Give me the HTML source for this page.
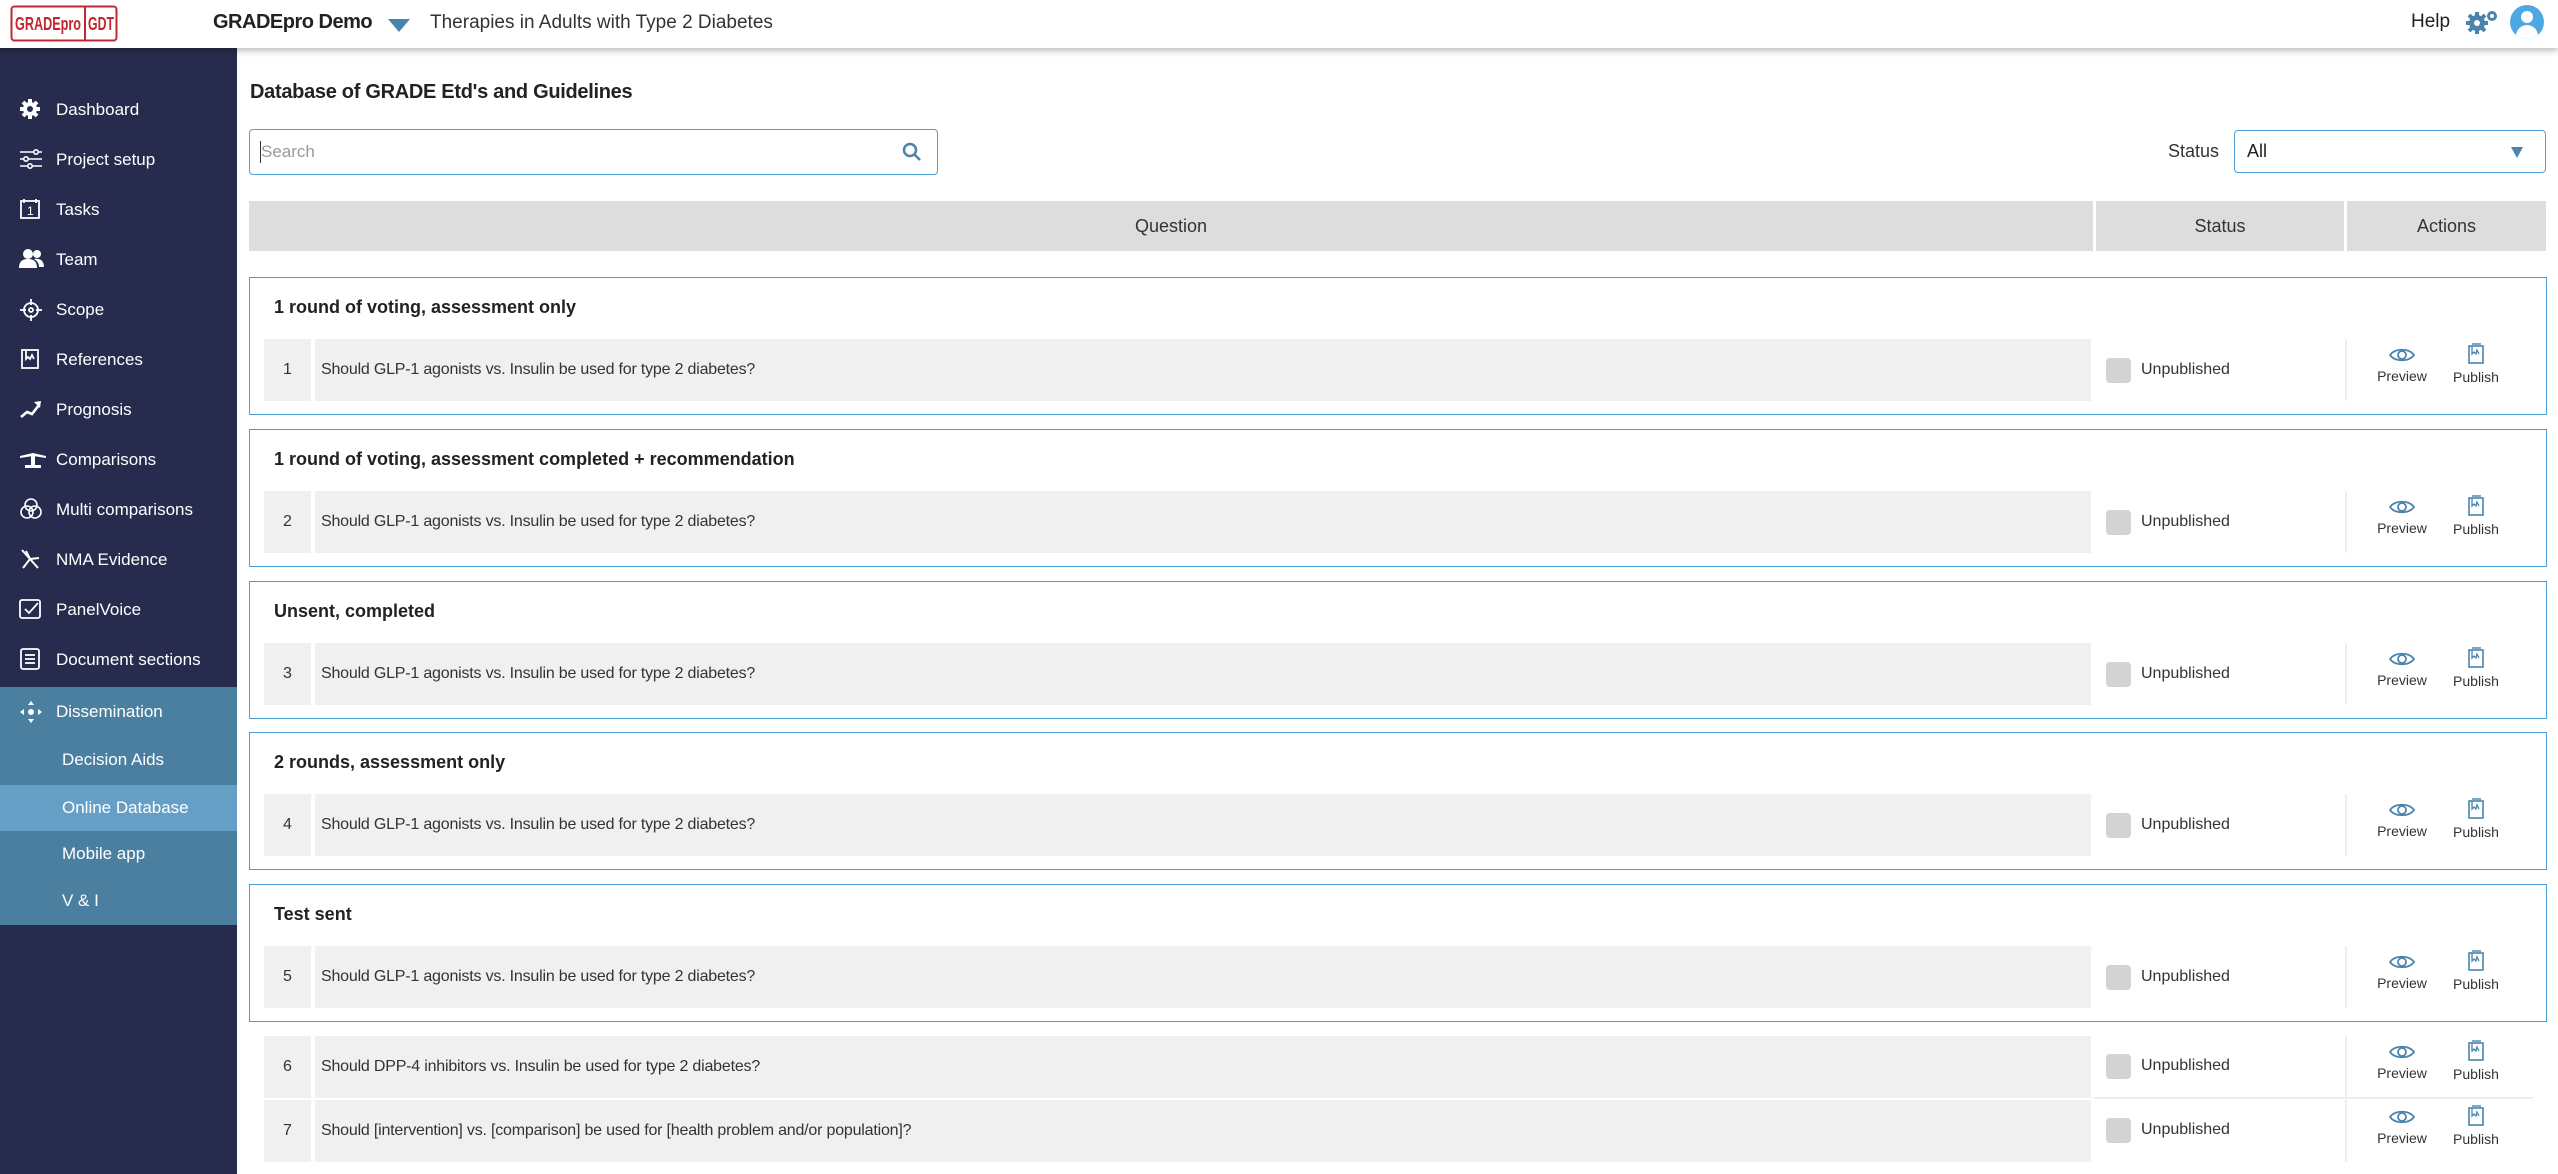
<!DOCTYPE html>
<html><head><meta charset="utf-8">
<style>
*{box-sizing:border-box;margin:0;padding:0}
body{width:2558px;height:1174px;overflow:hidden;background:#fff;font-family:"Liberation Sans",sans-serif;color:#333;position:relative}
.abs{position:absolute}
#hdr{left:0;top:0;width:2558px;height:48px;background:#fff;box-shadow:0 3px 6px rgba(0,0,0,.25);z-index:5}
#side{left:0;top:48px;width:237px;height:1126px;background:#272c4e}
.si{position:absolute;left:0;width:237px;height:50px;color:#fff;font-size:17px;line-height:50px;padding-left:56px}
.si svg{position:absolute;left:19px;top:13px}
.sub{position:absolute;left:0;width:237px;height:46px;line-height:46px;color:#fff;font-size:17px;padding-left:62px}
.gt{font-weight:bold;font-size:18px;color:#222}
.box{position:absolute;left:249px;width:2298px;height:138px;border:1.5px solid #4a9fd5}
.num{position:absolute;left:264px;width:47px;height:62px;background:#f0f0f0;text-align:center;line-height:62px;font-size:16px}
.q{position:absolute;left:315px;width:1776px;height:62px;background:#f0f0f0;line-height:62px;font-size:16px;padding-left:6px;letter-spacing:-0.2px}
.cb{position:absolute;left:2106px;width:25px;height:25px;background:#d3d3d3;border-radius:4px}
.ut{position:absolute;left:2141px;font-size:16px;line-height:20px}
.dv{position:absolute;left:2345px;width:2px;height:62px;background:#eee}
.act{position:absolute;font-size:14px;color:#333;text-align:center;width:70px}
.act svg{display:block;margin:0 auto 4px}
</style></head><body>
<div id="hdr" class="abs">
  <svg class="abs" style="left:10px;top:5px" width="108" height="37" viewBox="0 0 108 37">
    <rect x="1.5" y="1.5" width="105" height="34" rx="3" fill="none" stroke="#c0282d" stroke-width="2"/>
    <line x1="75" y1="1.5" x2="75" y2="35.5" stroke="#c0282d" stroke-width="2"/>
    <text x="5" y="25" font-family="Liberation Sans" font-weight="bold" font-size="18" fill="#c0282d" textLength="66" lengthAdjust="spacingAndGlyphs">GRADEpro</text>
    <text x="78" y="25" font-family="Liberation Sans" font-weight="bold" font-size="18" fill="#c0282d" textLength="26" lengthAdjust="spacingAndGlyphs">GDT</text>
  </svg>
  <div class="abs" style="left:213px;top:11px;font-weight:bold;font-size:20px;color:#222;letter-spacing:-0.5px">GRADEpro Demo</div>
  <div class="abs" style="left:388px;top:19px;width:0;height:0;border-left:11px solid transparent;border-right:11px solid transparent;border-top:13px solid #4a84ac"></div>
  <div class="abs" style="left:430px;top:12px;font-size:19px;color:#333">Therapies in Adults with Type 2 Diabetes</div>
  <div class="abs" style="left:2411px;top:11px;font-size:19px;color:#222">Help</div>
  <svg class="abs" style="left:2465px;top:9px" width="34" height="26" viewBox="0 0 34 26"><g fill="#4a84ac"><circle cx="12" cy="14" r="8"/><g stroke="#4a84ac" stroke-width="4"><line x1="12" y1="3" x2="12" y2="25"/><line x1="1" y1="14" x2="23" y2="14"/><line x1="4" y1="6" x2="20" y2="22"/><line x1="4" y1="22" x2="20" y2="6"/></g><circle cx="12" cy="14" r="3" fill="#fff"/><circle cx="27" cy="7" r="5"/><circle cx="27" cy="7" r="2" fill="#fff"/></g></svg>
  <div class="abs" style="left:2510px;top:5px;width:34px;height:34px;border-radius:50%;background:#4ea6e3;overflow:hidden">
    <div class="abs" style="left:11px;top:6px;width:12px;height:12px;border-radius:50%;background:#fff"></div>
    <div class="abs" style="left:6px;top:20px;width:22px;height:14px;border-radius:11px 11px 0 0;background:#fff"></div>
  </div>
</div>

<div id="side" class="abs">
  <div class="si" style="top:37px"><svg width="22" height="22" viewBox="0 0 22 22"><g fill="#fff"><circle cx="11" cy="11" r="7"/><g stroke="#fff" stroke-width="4"><line x1="11" y1="1" x2="11" y2="21"/><line x1="1" y1="11" x2="21" y2="11"/><line x1="4" y1="4" x2="18" y2="18"/><line x1="4" y1="18" x2="18" y2="4"/></g><circle cx="11" cy="11" r="3" fill="#272c4e"/></g></svg>Dashboard</div>
  <div class="si" style="top:87px"><svg width="24" height="22" viewBox="0 0 24 22" fill="none" stroke="#fff" stroke-width="1.6"><line x1="1" y1="4" x2="23" y2="4"/><line x1="1" y1="11" x2="23" y2="11"/><line x1="1" y1="18" x2="23" y2="18"/><circle cx="17" cy="4" r="2.2" fill="#272c4e"/><circle cx="7" cy="11" r="2.2" fill="#272c4e"/><circle cx="11" cy="18" r="2.2" fill="#272c4e"/></svg>Project setup</div>
  <div class="si" style="top:137px"><svg width="22" height="22" viewBox="0 0 22 22" fill="none" stroke="#fff" stroke-width="1.8"><rect x="2" y="3" width="18" height="17"/><line x1="5" y1="1" x2="5" y2="5"/><line x1="17" y1="1" x2="17" y2="5"/><text x="8" y="17" fill="#fff" stroke="none" font-size="12" font-family="Liberation Sans">1</text></svg>Tasks</div>
  <div class="si" style="top:187px"><svg width="26" height="22" viewBox="0 0 26 22" fill="#fff"><circle cx="9" cy="6" r="5"/><path d="M0 20c0-7 4-9 9-9s9 2 9 9z"/><circle cx="18" cy="6" r="4"/><path d="M15 11c5-1 10 1 10 8h-5c0-4-2-6-5-8z"/></svg>Team</div>
  <div class="si" style="top:237px"><svg width="24" height="24" viewBox="0 0 24 24" fill="none" stroke="#fff" stroke-width="1.8"><circle cx="12" cy="12" r="7"/><circle cx="12" cy="12" r="2"/><line x1="12" y1="1" x2="12" y2="7"/><line x1="12" y1="17" x2="12" y2="23"/><line x1="1" y1="12" x2="7" y2="12"/><line x1="17" y1="12" x2="23" y2="12"/></svg>Scope</div>
  <div class="si" style="top:287px"><svg width="22" height="22" viewBox="0 0 22 22" fill="none" stroke="#fff" stroke-width="1.8"><rect x="3" y="2" width="16" height="18"/><path d="M7 2v9l2-2 2 2 2-4 2 4"/></svg>References</div>
  <div class="si" style="top:337px"><svg width="24" height="22" viewBox="0 0 24 22" fill="none" stroke="#fff" stroke-width="2.6"><path d="M2 19l6-5 5 2 7-9"/><path d="M15 4l7-1-1 7z" fill="#fff" stroke="none"/></svg>Prognosis</div>
  <div class="si" style="top:387px"><svg width="28" height="22" viewBox="0 0 28 22" fill="#fff"><path d="M1 8l13-3 13 3v2l-13-2-13 2z"/><rect x="12" y="6" width="4" height="12"/><rect x="6" y="17" width="16" height="3"/></svg>Comparisons</div>
  <div class="si" style="top:437px"><svg width="24" height="22" viewBox="0 0 24 22" fill="none" stroke="#fff" stroke-width="1.6"><circle cx="12" cy="7" r="6"/><circle cx="8" cy="14" r="6"/><circle cx="16" cy="14" r="6"/></svg>Multi comparisons</div>
  <div class="si" style="top:487px"><svg width="22" height="22" viewBox="0 0 22 22" fill="none" stroke="#fff" stroke-width="2"><line x1="3" y1="2" x2="19" y2="20"/><line x1="11" y1="11" x2="4" y2="20"/><line x1="11" y1="11" x2="20" y2="10"/><line x1="11" y1="11" x2="7" y2="3"/></svg>NMA Evidence</div>
  <div class="si" style="top:537px"><svg width="22" height="22" viewBox="0 0 22 22" fill="none" stroke="#fff" stroke-width="1.8"><rect x="1" y="2" width="20" height="18" rx="2"/><path d="M6 11l4 4 9-10"/></svg>PanelVoice</div>
  <div class="si" style="top:587px"><svg width="22" height="22" viewBox="0 0 22 22" fill="none" stroke="#fff" stroke-width="1.8"><rect x="2" y="1" width="18" height="20" rx="2"/><line x1="6" y1="7" x2="16" y2="7"/><line x1="6" y1="11" x2="16" y2="11"/><line x1="6" y1="15" x2="16" y2="15"/></svg>Document sections</div>
  <div class="abs" style="left:0;top:639px;width:237px;height:238px;background:#4a7fa0"></div>
  <div class="si" style="top:639px"><svg width="24" height="24" viewBox="0 0 24 24" fill="#fff"><circle cx="12" cy="12" r="3"/><path d="M12 1l3 4h-6zM12 23l3-4h-6zM1 12l4-3v6zM23 12l-4-3v6z"/></svg>Dissemination</div>
  <div class="sub" style="top:689px">Decision Aids</div>
  <div class="sub" style="top:737px;background:#659fc6">Online Database</div>
  <div class="sub" style="top:783px">Mobile app</div>
  <div class="sub" style="top:830px">V &amp; I</div>
</div>

<div class="abs" style="left:250px;top:81px;font-weight:bold;font-size:20px;color:#222;letter-spacing:-0.3px">Database of GRADE Etd's and Guidelines</div>
<div class="abs" style="left:249px;top:129px;width:689px;height:46px;border:1.5px solid #4a9fd5;border-radius:4px">
  <div class="abs" style="left:10px;top:11px;width:1px;height:22px;background:#333"></div>
  <div class="abs" style="left:11px;top:12px;font-size:17px;color:#999">Search</div>
  <svg class="abs" style="left:652px;top:12px" width="20" height="20" viewBox="0 0 20 20" fill="none" stroke="#4a84ac" stroke-width="2.5"><circle cx="8" cy="8" r="6"/><line x1="12.5" y1="12.5" x2="18" y2="18"/></svg>
</div>
<div class="abs" style="left:2168px;top:141px;font-size:18px;color:#333">Status</div>
<div class="abs" style="left:2234px;top:130px;width:312px;height:43px;border:1.5px solid #4a9fd5;border-radius:4px">
  <div class="abs" style="left:12px;top:10px;font-size:18px;color:#222">All</div>
  <div class="abs" style="left:276px;top:16px;width:0;height:0;border-left:6px solid transparent;border-right:6px solid transparent;border-top:11px solid #4a84ac"></div>
</div>

<div class="abs" style="left:249px;top:201px;width:1844px;height:50px;background:#ddd;text-align:center;line-height:50px;font-size:18px">Question</div>
<div class="abs" style="left:2096px;top:201px;width:248px;height:50px;background:#ddd;text-align:center;line-height:50px;font-size:18px">Status</div>
<div class="abs" style="left:2347px;top:201px;width:199px;height:50px;background:#ddd;text-align:center;line-height:50px;font-size:18px">Actions</div>

<div class="box" style="top:277px"></div><div class="abs gt" style="left:274px;top:297px">1 round of voting, assessment only</div>
<div class="box" style="top:429px"></div><div class="abs gt" style="left:274px;top:449px">1 round of voting, assessment completed + recommendation</div>
<div class="box" style="top:581px"></div><div class="abs gt" style="left:274px;top:601px">Unsent, completed</div>
<div class="box" style="top:732px"></div><div class="abs gt" style="left:274px;top:752px">2 rounds, assessment only</div>
<div class="box" style="top:884px"></div><div class="abs gt" style="left:274px;top:904px">Test sent</div>

<svg width="0" height="0" style="position:absolute"><defs>
<symbol id="eye" viewBox="0 0 28 18"><path d="M2 9C7 2 21 2 26 9C21 16 7 16 2 9Z" fill="none" stroke="#4a84ac" stroke-width="1.8"/><circle cx="14" cy="9" r="4" fill="none" stroke="#4a84ac" stroke-width="1.8"/></symbol>
<symbol id="pub" viewBox="0 0 18 22"><rect x="2" y="3" width="14" height="17" fill="none" stroke="#4a84ac" stroke-width="1.6"/><line x1="5" y1="1" x2="14" y2="1" stroke="#4a84ac" stroke-width="1.4"/><path d="M5 3v8l2-2 2 2 1-4 2 4" fill="none" stroke="#4a84ac" stroke-width="1.3"/></symbol>
</defs></svg>

<div class="num" style="top:339px">1</div><div class="q" style="top:339px">Should GLP-1 agonists vs. Insulin be used for type 2 diabetes?</div>
<div class="cb" style="top:358px"></div><div class="ut" style="top:360px">Unpublished</div><div class="dv" style="top:339px"></div>
<div class="act" style="left:2367px;top:346px"><svg width="28" height="18"><use href="#eye"/></svg>Preview</div><div class="act" style="left:2441px;top:343px"><svg width="18" height="22"><use href="#pub"/></svg>Publish</div>

<div class="num" style="top:491px">2</div><div class="q" style="top:491px">Should GLP-1 agonists vs. Insulin be used for type 2 diabetes?</div>
<div class="cb" style="top:510px"></div><div class="ut" style="top:512px">Unpublished</div><div class="dv" style="top:491px"></div>
<div class="act" style="left:2367px;top:498px"><svg width="28" height="18"><use href="#eye"/></svg>Preview</div><div class="act" style="left:2441px;top:495px"><svg width="18" height="22"><use href="#pub"/></svg>Publish</div>

<div class="num" style="top:643px">3</div><div class="q" style="top:643px">Should GLP-1 agonists vs. Insulin be used for type 2 diabetes?</div>
<div class="cb" style="top:662px"></div><div class="ut" style="top:664px">Unpublished</div><div class="dv" style="top:643px"></div>
<div class="act" style="left:2367px;top:650px"><svg width="28" height="18"><use href="#eye"/></svg>Preview</div><div class="act" style="left:2441px;top:647px"><svg width="18" height="22"><use href="#pub"/></svg>Publish</div>

<div class="num" style="top:794px">4</div><div class="q" style="top:794px">Should GLP-1 agonists vs. Insulin be used for type 2 diabetes?</div>
<div class="cb" style="top:813px"></div><div class="ut" style="top:815px">Unpublished</div><div class="dv" style="top:794px"></div>
<div class="act" style="left:2367px;top:801px"><svg width="28" height="18"><use href="#eye"/></svg>Preview</div><div class="act" style="left:2441px;top:798px"><svg width="18" height="22"><use href="#pub"/></svg>Publish</div>

<div class="num" style="top:946px">5</div><div class="q" style="top:946px">Should GLP-1 agonists vs. Insulin be used for type 2 diabetes?</div>
<div class="cb" style="top:965px"></div><div class="ut" style="top:967px">Unpublished</div><div class="dv" style="top:946px"></div>
<div class="act" style="left:2367px;top:953px"><svg width="28" height="18"><use href="#eye"/></svg>Preview</div><div class="act" style="left:2441px;top:950px"><svg width="18" height="22"><use href="#pub"/></svg>Publish</div>

<div class="num" style="top:1036px">6</div><div class="q" style="top:1036px">Should DPP-4 inhibitors vs. Insulin be used for type 2 diabetes?</div>
<div class="cb" style="top:1054px"></div><div class="ut" style="top:1056px">Unpublished</div><div class="dv" style="top:1036px"></div>
<div class="act" style="left:2367px;top:1043px"><svg width="28" height="18"><use href="#eye"/></svg>Preview</div><div class="act" style="left:2441px;top:1040px"><svg width="18" height="22"><use href="#pub"/></svg>Publish</div>
<div class="abs" style="left:2094px;top:1097px;width:439px;height:2px;background:#eee"></div>

<div class="num" style="top:1100px">7</div><div class="q" style="top:1100px">Should [intervention] vs. [comparison] be used for [health problem and/or population]?</div>
<div class="cb" style="top:1118px"></div><div class="ut" style="top:1120px">Unpublished</div><div class="dv" style="top:1100px"></div>
<div class="act" style="left:2367px;top:1108px"><svg width="28" height="18"><use href="#eye"/></svg>Preview</div><div class="act" style="left:2441px;top:1105px"><svg width="18" height="22"><use href="#pub"/></svg>Publish</div>
</body></html>
